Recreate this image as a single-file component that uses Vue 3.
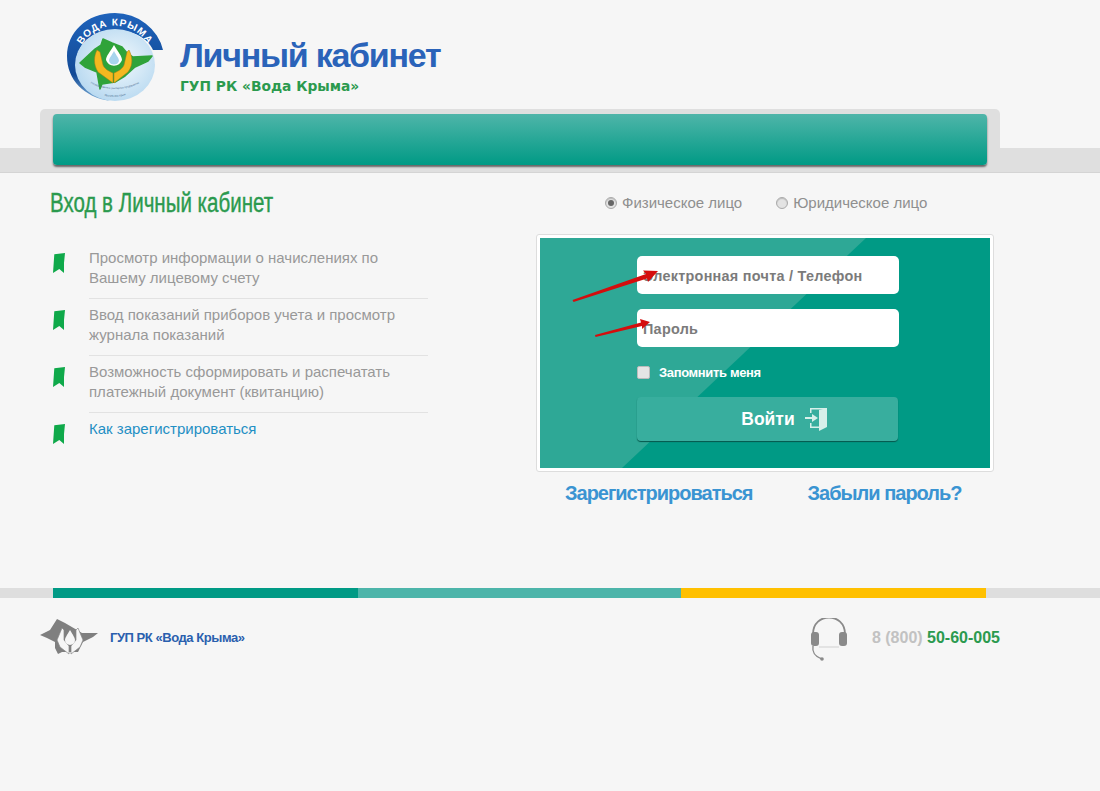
<template>
  <div class="page">
    <header class="head">
      <svg class="logo" viewBox="66 12 98 90" width="98" height="90">
        <defs>
          <path id="logoTop" d="M78 55 A38 38 0 0 1 152 55" />
          <path id="logoBottom" d="M82 78 A55 55 0 0 0 148 78" />
          <path id="logoBottom2" d="M97 93 A40 40 0 0 0 133 92" />
          <linearGradient id="logoBlue" x1="0" y1="0" x2="0" y2="1">
            <stop offset="0" stop-color="#1f63bb" />
            <stop offset="0.7" stop-color="#124a96" />
            <stop offset="1" stop-color="#7fb0d8" />
          </linearGradient>
          <radialGradient id="logoPale" cx="0.55" cy="0.45" r="0.6">
            <stop offset="0" stop-color="#f3f9fd" />
            <stop offset="1" stop-color="#b6d8f0" />
          </radialGradient>
        </defs>
        <path d="M163 50 A50 47 0 0 0 115 13 C86 13 67 33 67 56 C67 80 84 97 110 101 C90 93 76 80 76 64 C76 45 92 30 114 30 C133 30 148 38 153 50Z" fill="url(#logoBlue)" />
        <ellipse cx="115" cy="65" rx="40" ry="36" fill="url(#logoPale)" />
        <text class="logo-arc" fill="#fff" text-anchor="middle"><textPath href="#logoTop" startOffset="50%">ВОДА КРЫМА</textPath></text>
        <path d="M80 63 L95 49 L101 45 L103 39 L112 43 L122 47 L127 53 L133 57 L152 56 L148 61 L135 67 L125 76 L115 82 L102 84 L100 89 L97 72 L85 67Z" fill="#2fa33a" stroke="#2fa33a" stroke-width="1.5" stroke-linejoin="round" />
        <path d="M97 50 C94 56 93 64 98 72 L113 83 L113 73 C108 71 104 68 103 65 L100 52Z" fill="#f4b81f" stroke="#a47a14" stroke-width="0.5" stroke-linejoin="round" />
        <path d="M129 50 C132 56 134 64 128 72 L114 83 L114 73 C119 71 123 68 124 65 L127 52Z" fill="#f4b81f" stroke="#a47a14" stroke-width="0.5" stroke-linejoin="round" />
        <path d="M114 45 C110 52 106 56 106 60 A8.5 8.5 0 0 0 122 60 C122 56 118 52 114 45Z" fill="#fff" />
        <path d="M114 51 C112 55 109 58 109 61 A5.3 5.3 0 0 0 119 61 C119 58 116 55 114 51Z" fill="#a8d5ee" />
        <text class="logo-small" fill="#48688c" text-anchor="middle"><textPath href="#logoBottom" startOffset="50%">Государственное унитарное предприятие</textPath></text>
        <text class="logo-small" fill="#48688c" text-anchor="middle"><textPath href="#logoBottom2" startOffset="50%">Республики Крым</textPath></text>
      </svg>
      <div class="brand">
        <h1>Личный кабинет</h1>
        <p>ГУП РК «Вода Крыма»</p>
      </div>
    </header>

    <div class="nav">
      <div class="nav-tab">
        <div class="nav-bar"></div>
      </div>
    </div>

    <main class="main">
      <section class="info">
        <h2><span>Вход в Личный кабинет</span></h2>
        <ul>
          <li v-for="item in features" :key="item.text">
            <svg class="mark" viewBox="0 0 12 20" width="12" height="20">
              <path d="M1.3 1.3 L12 0 L11 10 L11 20 L6.3 16 L0 20Z" fill="#0fa94a" />
            </svg>
            <a v-if="item.link" href="#">{{ item.text }}</a>
            <span v-else>{{ item.text }}</span>
          </li>
        </ul>
      </section>

      <section class="auth">
        <div class="kinds">
          <label v-for="k in kinds" :key="k.name" class="kind">
            <i class="radio" :class="{ on: k.on }"></i>{{ k.name }}
          </label>
        </div>
        <div class="panel">
          <form class="form" @submit.prevent>
            <div class="field">Электронная почта / Телефон</div>
            <div class="field">Пароль</div>
            <label class="remember"><i class="check"></i><span>Запомнить меня</span></label>
            <button class="login" type="button">
              <span>Войти</span>
              <svg viewBox="805 409 23 24" width="23" height="24">
                <path d="M810 415 V410 H827 V429 L819 433 V430 H810 V425 H811.5 V428.5 H819 V412 L823 411.5 H811.5 V415Z" fill="#d7f0ea" />
                <path d="M805 419 H812 V416 L818 420 L812 424 V421 H805Z" fill="#d7f0ea" />
              </svg>
            </button>
          </form>
          <svg class="arrows" viewBox="537 235 456 236" width="456" height="236">
            <path d="M572.5 300 L646 274 L643 270.5 L658 271 L648 282 L647 278.5 L573.5 302Z" fill="#d40d0d" />
            <path d="M595 335 L641 322.5 L640 319 L650 322 L642 329 L642 326 L595.5 337Z" fill="#d40d0d" />
          </svg>
        </div>
        <div class="links">
          <a href="#">Зарегистрироваться</a>
          <a href="#">Забыли пароль?</a>
        </div>
      </section>
    </main>

    <div class="stripe">
      <i class="s1"></i><i class="s2"></i><i class="s3"></i>
    </div>

    <footer class="foot">
      <div class="foot-brand">
        <svg viewBox="40 618 58 38" width="58" height="38">
          <path d="M40 635 L50 630 L57 619 L65 623 L77 630 L82 633 L98 633 L93 637 L83 642 L78 652 L62 652 L58 654 L55 648 L55 642 L47 638Z" fill="#7f7f7f" />
          <path d="M62 628 L57 640 L60 647 L69 654 L69 646 L64 640 L64 630Z" fill="#f6f6f6" stroke="#888" stroke-width="0.7" />
          <path d="M78 628 L83 640 L80 647 L71 654 L71 646 L76 640 L76 630Z" fill="#f6f6f6" stroke="#888" stroke-width="0.7" />
          <path d="M70 630 C67 635 65 638 65 640 A5 5 0 0 0 75 640 C75 638 73 635 70 630Z" fill="#f6f6f6" />
        </svg>
        <span>ГУП РК «Вода Крыма»</span>
      </div>
      <div class="foot-phone">
        <svg viewBox="809 618 38 44" width="38" height="44">
          <path d="M812 634 C812 612 844 612 844 634" fill="none" stroke="#8a8a8a" stroke-width="1.8" />
          <path d="M818 647 H838" stroke="#dcdcdc" stroke-width="1.5" />
          <rect x="810" y="632" width="8" height="14" rx="3" fill="#8a8a8a" />
          <rect x="838" y="632" width="8" height="14" rx="3" fill="#8a8a8a" />
          <path d="M812 646 C811 652 813 656 821 659" fill="none" stroke="#8a8a8a" stroke-width="1.4" />
          <circle cx="821" cy="659" r="1.8" fill="#8a8a8a" />
        </svg>
        <div class="phone">8 (800) <b>50-60-005</b></div>
      </div>
    </footer>
  </div>
</template>

<script setup>
const features = [
  { text: 'Просмотр информации о начислениях по Вашему лицевому счету' },
  { text: 'Ввод показаний приборов учета и просмотр журнала показаний' },
  { text: 'Возможность сформировать и распечатать платежный документ (квитанцию)' },
  { text: 'Как зарегистрироваться', link: true }
]

const kinds = [
  { name: 'Физическое лицо', on: true },
  { name: 'Юридическое лицо', on: false }
]
</script>

<style>
body { background: #f6f6f6; }
</style>

<style scoped>
.page { min-height: 791px; background: #f6f6f6; font-family: "Liberation Sans", Arial, sans-serif; overflow: hidden; }

.head { display: flex; height: 109px; padding: 12px 0 0 66px; box-sizing: border-box; }
.logo { display: block; }
.logo-arc { font: bold 10px "Liberation Sans", sans-serif; letter-spacing: 1px; }
.logo-small { font: 2.6px "Liberation Sans", sans-serif; }
.brand { margin: 23px 0 0 16px; }
.brand h1 { margin: 0; font-size: 34px; line-height: 40px; font-weight: 700; color: #2a63b9; letter-spacing: -1.25px; }
.brand p { margin: 3px 0 0; font-family: "DejaVu Sans", sans-serif; font-size: 13.8px; line-height: 16px; font-weight: 700; color: #2b9a4e; }

.nav { height: 63px; border-bottom: 1px solid #d4d4d4; background: linear-gradient(transparent 39px, #dfdfdf 39px); }
.nav-tab { width: 960px; height: 63px; box-sizing: border-box; margin-left: 40px; padding: 5px 13px 0; background: #dfdfdf; border-radius: 5px 5px 0 0; }
.nav-bar { height: 51px; border-radius: 4px; background: linear-gradient(#4fb5a9, #009a85); box-shadow: 0 2px 2px rgba(0, 0, 0, 0.55); }

.main { display: flex; height: 415px; }
.info { width: 375px; margin-left: 53px; }
.info h2 { margin: 13px 0 0 -3px; height: 34px; font-size: 27px; line-height: 34px; font-weight: 400; color: #2b9a4e; white-space: nowrap; }
.info h2 span { display: inline-block; transform: scaleX(0.76); transform-origin: 0 50%; -webkit-text-stroke: 0.4px #2b9a4e; }
.info ul { margin: 28px 0 0; padding: 0; list-style: none; }
.info li { position: relative; padding: 0 0 11px 36px; margin-bottom: 6px; font-size: 15px; line-height: 20px; color: #999; }
.info li span, .info li a { display: block; }
.info li::after { content: ""; position: absolute; left: 36px; right: 0; bottom: 0; border-bottom: 1px solid #e2e2e2; }
.info li:last-child::after { display: none; }
.info li a { color: #1f8fc4; text-decoration: none; }
.mark { position: absolute; left: 0; top: 5px; }

.auth { width: 458px; margin-left: 108px; }
.kinds { display: flex; height: 20px; margin-top: 20px; padding-left: 69px; color: #8f8f8f; font-size: 15px; line-height: 20px; }
.kind { display: flex; align-items: center; margin-right: 34px; white-space: nowrap; }
.radio { width: 12px; height: 12px; margin-right: 5px; box-sizing: border-box; border: 1px solid #aaa; border-radius: 50%; background: #e3e3e3; box-shadow: inset 0 1px 1px #bbb; position: relative; }
.radio.on::after { content: ""; position: absolute; left: 2px; top: 2px; width: 6px; height: 6px; border-radius: 50%; background: #666; }

.panel { position: relative; margin-top: 21px; width: 458px; height: 238px; box-sizing: border-box; padding: 3px; background: #fff; border: 1px solid #ddd; border-radius: 3px; }
.form { position: relative; height: 230px; box-sizing: border-box; padding: 18px 0 0 97px; background: #009a85; overflow: hidden; }
.form::before { content: ""; position: absolute; inset: 0; background: #2ea896; clip-path: polygon(0 0, 326px 0, 82px 100%, 0 100%); }
.field { position: relative; width: 262px; height: 38px; box-sizing: border-box; margin-bottom: 15px; padding-left: 6px; background: #fff; border-radius: 5px; font-size: 14.4px; line-height: 40px; font-weight: 700; color: #7b7b7b; letter-spacing: 0.28px; white-space: nowrap; }
.remember { position: relative; display: flex; align-items: center; height: 14px; margin-top: 18px; color: #fff; font-size: 13px; font-weight: 700; letter-spacing: -0.35px; }
.check { width: 13px; height: 13px; margin-right: 9px; background: #e5e5e5; border: 1px solid #bbb; box-sizing: border-box; border-radius: 2px; }
.login { position: relative; display: flex; align-items: center; justify-content: center; gap: 10px; width: 261px; height: 44px; margin-top: 18px; padding: 0 0 0 34px; border: 0; border-radius: 4px; background: #38ae9e; box-shadow: 0 1px 1px #06574c; color: #fff; font-family: inherit; font-size: 17.5px; font-weight: 700; }

.arrows { position: absolute; left: 0; top: 0; pointer-events: none; }

.links { display: flex; margin: 9px 0 0 29px; font-size: 20px; line-height: 24px; font-weight: 700; letter-spacing: -1px; white-space: nowrap; }
.links a { color: #3a94d2; text-decoration: none; margin-right: 55px; }

.stripe { display: flex; height: 10px; padding-left: 53px; background: #dedede; }
.stripe i { display: block; height: 10px; }
.s1 { width: 305px; background: #009a85; }
.s2 { width: 323px; background: #4db5aa; }
.s3 { width: 305px; background: #ffc000; }

.foot { display: flex; justify-content: space-between; width: 960px; margin-left: 40px; padding-top: 20px; }
.foot-brand { display: flex; align-items: flex-start; }
.foot-brand span { margin: 12px 0 0 12px; font-size: 13px; line-height: 16px; font-weight: 700; color: #2a5fae; letter-spacing: -0.45px; white-space: nowrap; }
.foot-phone { display: flex; align-items: flex-start; }
.phone { margin: 10px 0 0 24px; font-size: 16px; line-height: 20px; font-weight: 700; color: #c2c2c2; white-space: nowrap; }
.phone b { color: #2b9a4e; }
</style>
